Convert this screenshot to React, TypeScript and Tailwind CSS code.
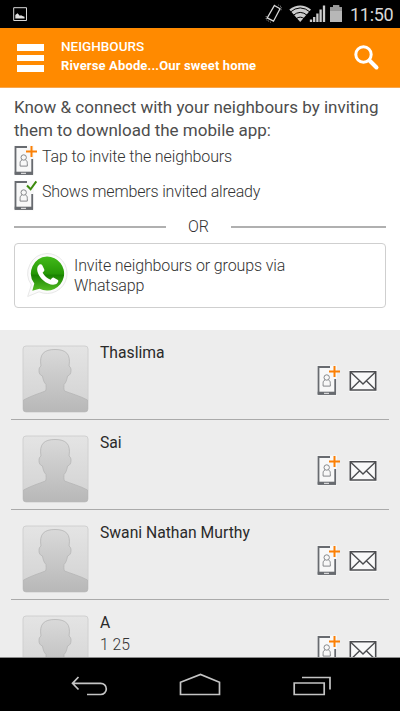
interface Neighbour {
    name: string;
    flat?: string;
}

const neighbours: Neighbour[] = [
    { name: 'Thaslima' },
    { name: 'Sai' },
    { name: 'Swani Nathan Murthy' },
    { name: 'A', flat: '1 25' },
];

function PhoneIcon({ invited = false }: { invited?: boolean }) {
    return (
        <svg width="24" height="32" viewBox="0 0 24 32" fill="none" className="shrink-0">
            <path d="M0 .5h20v30H0z" fill="#f8f8f8" />
            <path d="M13 2H1.500v26.500h16.700V14" stroke="#686b70" strokeWidth="1.800" />
            <path d="M.7 26.700H19v3.200H.7z" fill="#686b70" />
            <path d="M7 28.300h5" stroke="#f4f4f4" strokeWidth="1" />
            <circle cx="9.700" cy="12.500" r="2.700" stroke="#85878a" strokeWidth="1" />
            <path d="M8 14.900c-1.500.7-1.900 1.700-1.900 3.500v2.700h7.200v-2.700c0-1.800-.4-2.800-1.900-3.500" stroke="#85878a" strokeWidth="1" />
            {invited ? (
                <path d="M13 5.500l3.600 3.800 5.700-8" stroke="#3c8a0c" strokeWidth="2" />
            ) : (
                <path d="M17.500 1v11M12 6.500h11" stroke="#fb8005" strokeWidth="2" />
            )}
        </svg>
    );
}

function MailIcon() {
    return (
        <svg width="28" height="22" viewBox="0 0 28 22" fill="none">
            <path d="M0 0h28v22H0z" fill="#f9f9f9" />
            <path d="M1.300 1.700h25.400v18.300H1.300z" stroke="#4c4d50" strokeWidth="1.600" />
            <path d="M1.500 2l9.200 8.700 3.300 3.300 3.300-3.300L26.500 2M1.500 19.700l9.200-9M26.500 19.700l-9.200-9" stroke="#4c4d50" strokeWidth="1.400" />
        </svg>
    );
}

function Avatar() {
    return (
        <svg width="67" height="68" viewBox="0 0 67 68" className="shrink-0">
            <defs>
                <linearGradient id="tile" x1="0" y1="0" x2="0" y2="1">
                    <stop offset="0" stopColor="#e4e4e4" />
                    <stop offset="1" stopColor="#d2d2d2" />
                </linearGradient>
                <linearGradient id="person" x1="0" y1="0" x2="0" y2="1">
                    <stop offset="0" stopColor="#d9d9d9" />
                    <stop offset="1" stopColor="#b8b8b8" />
                </linearGradient>
            </defs>
            <rect x="1" y="1" width="65" height="66" rx="3" fill="url(#tile)" stroke="#d0d0d0" />
            <path
                d="M1.500 55C9 51 17 48.500 23.500 46C24.500 44 24 41 24 39.500C22 37.500 21 34.500 20.500 31C18 30.500 17 28 17 25.500C17 23.500 17.500 22 19 21C17 9 22 4.500 33 4.500C44 4.500 49 9 47 21C48.500 22 49 23.500 49 25.500C49 28 48 30.500 45.500 31C45 34.500 44 37.500 42 39.500C42 41 41.500 44 42.500 46C49 48.500 58 51 65.500 55V64.500Q65.500 66.500 63.500 66.500H3.500Q1.500 66.500 1.500 64.500Z"
                fill="url(#person)"
                stroke="#b5b5b5"
                strokeWidth=".8"
            />
        </svg>
    );
}

function WhatsappIcon() {
    return (
        <svg width="42" height="46" viewBox="0 0 42 46" className="shrink-0">
            <defs>
                <linearGradient id="bubble" x1="0" y1="0" x2="0" y2="1">
                    <stop offset="0" stopColor="#42b91a" />
                    <stop offset=".5" stopColor="#269806" />
                    <stop offset=".55" stopColor="#198300" />
                    <stop offset="1" stopColor="#55bd24" />
                </linearGradient>
            </defs>
            <path d="M21 .5a20 20 0 1 1-8 38.300L1.700 43.500l3.700-11.600A20 20 0 0 1 21 .5z" fill="#fbfbfb" stroke="#e8e8e8" />
            <path d="M21 3.500a17 17 0 1 1-7.500 32.200L6.300 37.800l2-7.200A17 17 0 0 1 21 3.500z" fill="url(#bubble)" />
            <path d="M11.800 13.200c1.600-2.500 3.600-2.600 4.600-.8l1.900 4c.5 1.300-.9 2.300-1.700 3.300 2 3.400 4.400 5.500 8 7 1-1.300 2-2.700 3.300-2l4 2.200c1.200.8-.2 3.400-2.400 4.400-3 1.300-8.200-.2-12.400-4-4.300-4-7.300-9.900-5.300-14.100z" fill="#fff" />
        </svg>
    );
}

function StatusBar() {
    return (
        <div className="flex h-7 shrink-0 items-center bg-black pr-[6px] pl-3">
            <svg width="16" height="16" viewBox="0 0 16 16" fill="none">
                <path d="M1.700 1.700h12.800v12.800H1.700z" stroke="#d8d8d8" />
                <path d="M3.300 12.500V9l2.200-1.800 2.300 2.500 1.200-.4 2 1 1.500.5v1.700z" fill="#e0e0e0" />
            </svg>
            <div className="flex-1" />
            <svg width="78" height="22" viewBox="0 0 78 22" fill="none">
                <path d="M9.400 2.500L15 5.800 8.500 18.200 2.200 14.900z" stroke="#d8d8d8" strokeWidth="1.300" />
                <path d="M13.300 2l3 1.700-.4 4.400M1.200 13v3.700L5.800 19.300" stroke="#999" strokeDasharray="1 1" />
                <path d="M24.300 6.500Q35.200-1.500 46 6.500L35.200 19z" fill="#ccc" />
                <path d="M25 9.300Q35.200.5 45.500 9.300M28 12.500Q35.200 6.300 42.500 12.500M31 15.800Q35.200 12.500 39.500 15.800" stroke="#000" strokeWidth="1" />
                <path d="M46 16.500V19M49.200 14v5M52.400 10.500V19M55.600 6.500V19M59 2.500V19" stroke="#ccc" strokeWidth="2.300" />
                <path d="M65 4.200h3V2.300h6.200v1.900h2.800V19H65z" fill="#b7b7b7" />
                <path d="M65 4.200h3V2.300h6.200v1.900h2.800V8H65z" fill="#999" />
            </svg>
            <span className="mt-[2px] ml-[7px] w-[44px] text-[18px] leading-7 tracking-[-0.3px] whitespace-nowrap text-[#d8d8d8]">11:50</span>
        </div>
    );
}

function Header() {
    return (
        <header className="flex h-[60px] shrink-0 border-b border-[#f7a64f] bg-[#ff8a00] text-white">
            <div className="mt-4 ml-[17px] flex w-[27px] flex-col gap-1">
                <div className="h-[6.500px] bg-white" />
                <div className="h-[6.500px] bg-white" />
                <div className="h-[6.500px] bg-white" />
            </div>
            <div className="ml-[17px] flex-1 pt-[9px] whitespace-nowrap">
                <div className="text-[13.500px] leading-[19px] font-medium">NEIGHBOURS</div>
                <div className="text-[13px] leading-[20px] font-bold tracking-[0.140px]">Riverse Abode...Our sweet home</div>
            </div>
            <svg width="27" height="27" viewBox="0 0 27 27" fill="none" className="mt-4 mr-5" stroke="#fff">
                <circle cx="10.500" cy="10.500" r="7.700" strokeWidth="3" />
                <path d="M16.500 16.500l7 7" strokeWidth="4" strokeLinecap="round" />
            </svg>
        </header>
    );
}

function Intro() {
    return (
        <section className="h-[242px] shrink-0 bg-white px-[14px] pt-2 text-[#4d4d4d]">
            <p className="h-[49px] text-[17px] leading-[23px] whitespace-nowrap">
                Know &amp; connect with your neighbours by inviting
                <br />
                them to download the mobile app:
            </p>
            <div className="flex h-[35px] text-[16px] leading-[24px] font-light tracking-[-0.120px] text-[#333]">
                <PhoneIcon />
                <span className="ml-1">Tap to invite the neighbours</span>
            </div>
            <div className="flex h-[35px] text-[16px] leading-[24px] font-light tracking-[-0.170px] text-[#333]">
                <PhoneIcon invited />
                <span className="ml-1">Shows members invited already</span>
            </div>
            <div className="flex h-[28px] items-start text-[16px] leading-[24px] font-light text-[#333]">
                <div className="mt-[11px] h-[1.500px] w-[152px] bg-[#b0b0b0]" />
                <span className="ml-[22px] w-[43px]">OR</span>
                <div className="mt-[11px] h-[1.500px] w-[155px] bg-[#b0b0b0]" />
            </div>
            <div className="flex h-[65px] w-[372px] rounded-[4px] border-[1.500px] border-[#cfcfcf] pt-[9px] pl-[11px] text-[16px] leading-5 font-light tracking-[-0.120px] text-[#333]">
                <WhatsappIcon />
                <span className="ml-[6px] pt-[3px]">
                    Invite neighbours or groups via
                    <br />
                    Whatsapp
                </span>
            </div>
        </section>
    );
}

function NeighbourRow({ neighbour }: { neighbour: Neighbour }) {
    return (
        <div className="mx-[11px] flex h-[90px] shrink-0 border-b border-[#aaa] pt-[15px] pl-[11px]">
            <Avatar />
            <div className="ml-[11px] flex-1 text-[15.700px] leading-[22px] whitespace-nowrap">
                <div className="-mt-[3px] text-[#2a2a2a]">{neighbour.name}</div>
                {neighbour.flat && <div className="font-light text-[#333]">{neighbour.flat}</div>}
            </div>
            <div className="mt-5 mr-3 flex gap-[8px]">
                <PhoneIcon />
                <div className="pt-[5px]">
                    <MailIcon />
                </div>
            </div>
        </div>
    );
}

function NavBar() {
    return (
        <nav className="flex h-[54px] shrink-0 justify-between border-t border-[#8a8a8a] bg-black px-[69px]">
            <svg width="40" height="53" viewBox="0 1 40 53" fill="none" stroke="#c4c4c4" strokeWidth="1.700">
                <path d="M9.500 20l-6 6.300 6 6.200M3.500 26.300h28.200a5.500 5.500 0 0 1 0 11.200H18" />
            </svg>
            <svg width="42" height="53" viewBox="0 1 42 53" fill="none" stroke="#c4c4c4" strokeWidth="1.700">
                <path d="M1.500 37.500V25.300L21.500 17.500l19 7.800v12.200z" />
            </svg>
            <svg width="40" height="53" viewBox="0 1 40 53" fill="none" stroke="#c4c4c4" strokeWidth="1.700">
                <path d="M3.200 26h30v11.500h-30zM11 20.500h28V32.500" />
            </svg>
        </nav>
    );
}

export default function App() {
    return (
        <div className="flex h-[711px] w-[400px] flex-col overflow-hidden bg-white font-['Roboto',sans-serif]">
            <StatusBar />
            <Header />
            <Intro />
            <main className="flex flex-1 flex-col overflow-hidden bg-[#ededed]">
                {neighbours.map((n) => (
                    <NeighbourRow key={n.name} neighbour={n} />
                ))}
            </main>
            <NavBar />
        </div>
    );
}
